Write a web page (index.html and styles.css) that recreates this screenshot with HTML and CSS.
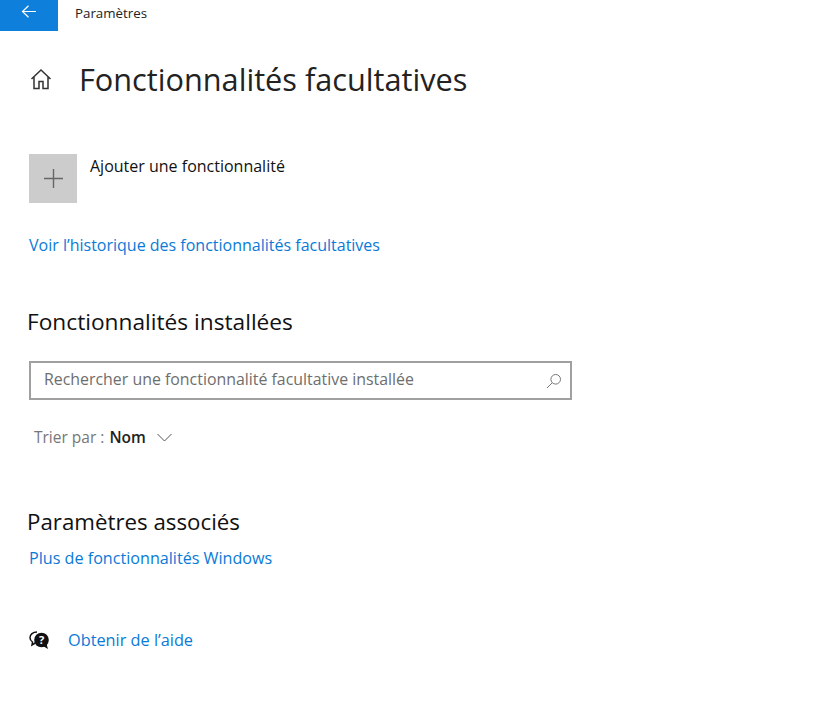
FILE: index.html
```html
<!DOCTYPE html>
<html lang="fr">
<head>
<meta charset="utf-8">
<title>Paramètres</title>
<link rel="stylesheet" href="styles.css">
</head>
<body>
<header class="topbar">
  <div class="back">
    <svg width="16" height="14" viewBox="0 0 16 14" fill="none" stroke="#fff" stroke-width="1.2"><path d="M15 6.500H1.500M7.500 .8 1.500 6.500l6 5.700"/></svg>
  </div>
  <span class="app-title">Paramètres</span>
</header>
<main class="page">
  <div class="title-row">
    <svg class="home" width="22" height="22" viewBox="0 0 22 22" fill="none" stroke="#333" stroke-width="1.5"><path d="M1.500 11 11 2 20.500 11M4 8.500v12h5v-7h4v7h5V8.500"/></svg>
    <h1>Fonctionnalités facultatives</h1>
  </div>
  <div class="add-row">
    <div class="add-tile">
      <svg width="19" height="19" viewBox="0 0 19 19" stroke="#666" stroke-width="1.4"><path d="M9.500 0v19M0 9.500h19"/></svg>
    </div>
    <span class="add-label">Ajouter une fonctionnalité</span>
  </div>
  <a class="link history">Voir l’historique des fonctionnalités facultatives</a>
  <h2 class="installed">Fonctionnalités installées</h2>
  <div class="search">
    <span class="placeholder">Rechercher une fonctionnalité facultative installée</span>
    <svg width="16" height="16" viewBox="0 0 16 16" fill="none" stroke="#777" stroke-width="1"><circle cx="9.700" cy="6.300" r="4.800"/><path d="M6.300 9.700 1 15"/></svg>
  </div>
  <div class="sort">
    <span class="sort-label">Trier par :</span>
    <strong class="sort-value">Nom</strong>
    <svg width="15" height="9" viewBox="0 0 15 9" fill="none" stroke="#555" stroke-width="1"><path d="M.5 1 7.500 8l7-7"/></svg>
  </div>
  <h2 class="related">Paramètres associés</h2>
  <a class="link more">Plus de fonctionnalités Windows</a>
  <div class="help">
    <svg width="21" height="19" viewBox="0 0 21 19"><path d="M8 1C4 1 1 3.500 1 6.700c0 1.800 1 3.300 2.500 4.300L3 14l3.200-2" fill="#fff" stroke="#111" stroke-width="1.500"/><circle cx="12.500" cy="9" r="7.300" fill="#111"/><path d="M14 15l5 3-1.500-5z" fill="#111"/><text x="12.500" y="12.800" class="q">?</text></svg>
    <a class="link help-link">Obtenir de l’aide</a>
  </div>
</main>
</body>
</html>
```
FILE: styles.css
```css
* { box-sizing: border-box; }
html, body { margin: 0; padding: 0; }
body {
  width: 838px;
  height: 706px;
  overflow: hidden;
  background: #fff;
  color: #000;
  font-family: "Open Sans", "Noto Sans", sans-serif;
}
.topbar { display: flex; align-items: center; height: 31px; }
.back {
  width: 58px;
  height: 31px;
  background: #0f7fdc;
  display: flex;
  justify-content: center;
  padding-top: 5px;
  margin-right: 17px;
}
.app-title { font-size: 13.300px; color: #222; margin-top: -6px; }
.page { padding-left: 29px; }
.title-row { display: flex; align-items: center; height: 50px; margin-top: 23px; }
.home { margin-right: 27px; margin-left: 1px; }
h1 { font-size: 30.700px; font-weight: 400; margin: 0; color: #222; }
.add-row { display: flex; margin-top: 50px; }
.add-tile {
  width: 48px;
  height: 49px;
  background: #cccccc;
  display: flex;
  align-items: center;
  justify-content: center;
}
.add-label { font-size: 16px; margin-left: 13px; color: #111; line-height: 26px; margin-top: -1px; }
.link { color: #0a7ad8; font-size: 16px; line-height: 20px; }
.history { display: block; margin-top: 32px; }
h2 { font-size: 22.300px; font-weight: 400; margin: 0; color: #111; line-height: 28px; }
.installed { margin-top: 53px; margin-left: -2px; font-size: 22.700px; }
.search {
  width: 543px;
  height: 39px;
  margin-top: 25px;
  border: 2px solid #a0a0a0;
  display: flex;
  align-items: center;
  justify-content: space-between;
  padding: 0 8px 0 13px;
}
.placeholder { font-size: 15.900px; color: #6e6e6e; margin-top: -3px; }
.sort { display: flex; align-items: center; margin-top: 27px; margin-left: 5px; font-size: 15.500px; line-height: 20px; }
.sort-label { color: #777; }
.sort-value { font-weight: 600; color: #222; font-size: 15.500px; margin-left: 5px; }
.sort svg { margin-left: 11px; }
.related { margin-top: 61px; margin-left: -2px; }
.more { display: block; margin-top: 12px; font-size: 16.150px; }
.help { display: flex; align-items: center; margin-top: 62px; }
.help svg { margin-right: 18px; }
.help-link { font-size: 16.300px; }
.q { font-size: 11px; font-weight: 700; fill: #fff; text-anchor: middle; }
```
